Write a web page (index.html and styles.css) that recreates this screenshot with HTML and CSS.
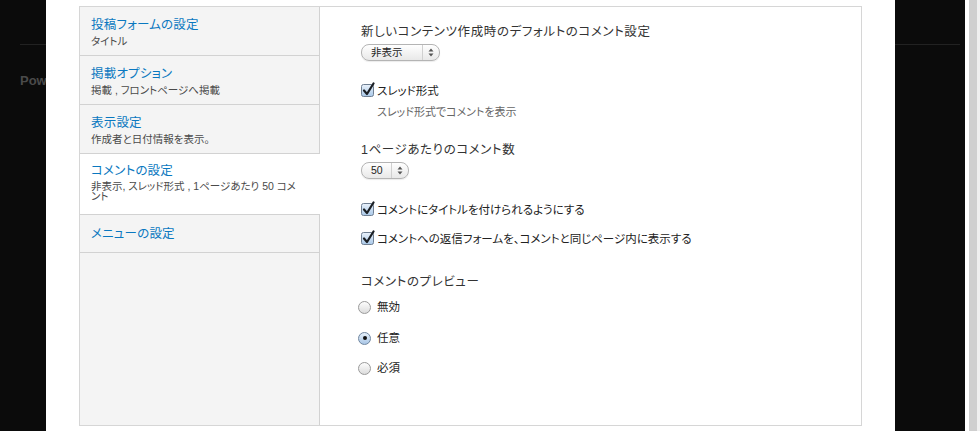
FILE: index.html
```html
<!DOCTYPE html>
<html lang="ja">
<head>
<meta charset="utf-8">
<title>コメントの設定</title>
<link rel="stylesheet" href="styles.css">
</head>
<body>
<div class="page">
  <div class="bg-left">
    <div class="bg-rule"></div>
    <div class="bg-text">Pow</div>
  </div>
  <div class="modal">
    <div class="panel">
      <ul class="tabs">
        <li class="tab">
          <div class="tab-title">投稿フォームの設定</div>
          <div class="tab-desc">タイトル</div>
        </li>
        <li class="tab">
          <div class="tab-title">掲載オプション</div>
          <div class="tab-desc">掲載 , フロントページへ掲載</div>
        </li>
        <li class="tab">
          <div class="tab-title">表示設定</div>
          <div class="tab-desc">作成者と日付情報を表示。</div>
        </li>
        <li class="tab active">
          <div class="tab-title">コメントの設定</div>
          <div class="tab-desc">非表示, スレッド形式 , 1ページあたり 50 コメント</div>
        </li>
        <li class="tab tab-single">
          <div class="tab-title">メニューの設定</div>
        </li>
      </ul>
      <div class="pane">
        <div class="field-label l1">新しいコンテンツ作成時のデフォルトのコメント設定</div>
        <div class="select s1">
          <span class="select-value">非表示</span>
          <span class="select-arrows"><svg width="6" height="9" viewBox="0 0 6 9"><path d="M3 0.5 L5.5 3.5 H0.5 Z M3 8.5 L5.5 5.5 H0.5 Z" fill="#555"/></svg></span>
        </div>
        <label class="check c1">
          <span class="box"><svg width="15" height="15" viewBox="0 0 15 15"><defs><linearGradient id="cg" x1="0" y1="0" x2="0" y2="1"><stop offset="0" stop-color="#eaf2fb"/><stop offset="1" stop-color="#a9c8e8"/></linearGradient></defs><rect x="0.5" y="2.5" width="12" height="12" rx="2" fill="url(#cg)" stroke="#6f7f92"/><path d="M3 8.5 L6 12 L12.5 1.5" fill="none" stroke="#1b1f24" stroke-width="2.2" stroke-linecap="round" stroke-linejoin="round"/></svg></span>
          <span class="check-text">スレッド形式</span>
        </label>
        <div class="field-desc d1">スレッド形式でコメントを表示</div>
        <div class="field-label l2">1ページあたりのコメント数</div>
        <div class="select s2">
          <span class="select-value">50</span>
          <span class="select-arrows"><svg width="6" height="9" viewBox="0 0 6 9"><path d="M3 0.5 L5.5 3.5 H0.5 Z M3 8.5 L5.5 5.5 H0.5 Z" fill="#555"/></svg></span>
        </div>
        <label class="check c2">
          <span class="box"><svg width="15" height="15" viewBox="0 0 15 15"><rect x="0.5" y="2.5" width="12" height="12" rx="2" fill="url(#cg)" stroke="#6f7f92"/><path d="M3 8.5 L6 12 L12.5 1.5" fill="none" stroke="#1b1f24" stroke-width="2.2" stroke-linecap="round" stroke-linejoin="round"/></svg></span>
          <span class="check-text">コメントにタイトルを付けられるようにする</span>
        </label>
        <label class="check c3">
          <span class="box"><svg width="15" height="15" viewBox="0 0 15 15"><rect x="0.5" y="2.5" width="12" height="12" rx="2" fill="url(#cg)" stroke="#6f7f92"/><path d="M3 8.5 L6 12 L12.5 1.5" fill="none" stroke="#1b1f24" stroke-width="2.2" stroke-linecap="round" stroke-linejoin="round"/></svg></span>
          <span class="check-text">コメントへの返信フォームを、コメントと同じページ内に表示する</span>
        </label>
        <div class="field-label l3">コメントのプレビュー</div>
        <label class="radio r1">
          <span class="dot"></span>
          <span class="radio-text">無効</span>
        </label>
        <label class="radio r2">
          <span class="dot on"></span>
          <span class="radio-text">任意</span>
        </label>
        <label class="radio r3">
          <span class="dot"></span>
          <span class="radio-text">必須</span>
        </label>
      </div>
    </div>
  </div>
  <div class="bg-right">
    <div class="bg-rule"></div>
  </div>
  <div class="gutter"></div>
  <div class="scrollbar"></div>
  <div class="scroll-edge"></div>
</div>
</body>
</html>
```
FILE: styles.css
```css
* { box-sizing: border-box; }
html, body { margin: 0; padding: 0; }
body {
  background: #0b0b0b;
  font-family: "Liberation Sans", "Noto Sans CJK JP", sans-serif;
  font-feature-settings: "palt";
  color: #333;
  overflow: hidden;
}
.page {
  display: flex;
  width: 980px;
  height: 431px;
  overflow: hidden;
}
.bg-left {
  width: 46px;
  flex: none;
  padding-left: 20px;
  overflow: hidden;
}
.bg-rule {
  margin-top: 44px;
  height: 1px;
  background: #222;
}
.bg-text {
  margin-top: 28px;
  font-size: 13px;
  line-height: 16px;
  color: #4a4a4a;
  font-weight: bold;
  white-space: nowrap;
}
.bg-right {
  width: 70px;
  flex: none;
  padding-right: 5px;
}
.gutter { width: 4px; flex: none; background: #fff; }
.scrollbar { width: 8px; flex: none; background: #cfcfcf; }
.scroll-edge { width: 3px; flex: none; background: #f0f0f0; }

.modal {
  width: 849px;
  flex: none;
  background: #fff;
  padding: 6px 0 0 33px;
}
.panel {
  width: 783px;
  height: 420px;
  border: 1px solid #d6d6d6;
  display: flex;
}
.tabs {
  list-style: none;
  margin: 0;
  padding: 0;
  width: 240px;
  flex: none;
  background: #f4f4f4;
  border-right: 1px solid #d2d2d2;
}
.tab {
  padding: 10px 16px 7px 11px;
  border-bottom: 1px solid #d2d2d2;
  height: 49px;
}
.tab.active {
  background: #fff;
  margin-right: -1px;
  height: 61px;
  padding-top: 9px;
}
.tab-single { height: 38px; padding-top: 11px; }
.tab-title {
  font-size: 12.5px;
  line-height: 16px;
  color: #0a78c0;
  letter-spacing: 0.2px;
}
.tab-desc {
  font-size: 10.5px;
  line-height: 10px;
  margin-top: 3px;
  color: #4a4a4a;
}
.tab.active .tab-desc { margin-top: 2px; }

.pane {
  flex: 1;
  padding: 17px 0 0 41px;
  display: flex;
  flex-direction: column;
  align-items: flex-start;
}
.field-label {
  font-size: 12.5px;
  line-height: 16px;
  color: #333;
  white-space: nowrap;
  letter-spacing: 0.6px;
}
.field-desc {
  font-size: 11px;
  line-height: 14px;
  color: #666;
  margin-left: 16px;
}
.select {
  height: 17px;
  border: 1px solid #b4b4b4;
  border-radius: 8px;
  background: linear-gradient(#ffffff, #e8e8e8);
  display: flex;
  align-items: stretch;
  box-shadow: 0 1px 1px rgba(0,0,0,0.08);
}
.select-value {
  font-size: 10.5px;
  line-height: 15px;
  color: #222;
  padding-left: 9px;
}
.select-arrows {
  border-left: 1px solid #d0d0d0;
  display: flex;
  align-items: center;
  justify-content: center;
  width: 17px;
}
.s1 { width: 79px; margin-top: 4px; }
.s1 .select-value { width: 61px; }
.s2 { width: 48px; margin-top: 4px; }
.s2 .select-value { width: 30px; }

.check, .radio {
  display: flex;
  align-items: center;
  height: 16px;
}
.box { width: 15px; height: 15px; display: block; margin-top: -3px; }
.box svg { display: block; }
.check-text, .radio-text {
  font-size: 11.5px;
  line-height: 16px;
  color: #222;
  margin-left: 1px;
  white-space: nowrap;
}
.c1 { margin-top: 22px; }
.d1 { margin-top: 6px; }
.l2 { margin-top: 23px; }
.c2 { margin-top: 23px; }
.c3 { margin-top: 13px; }
.l3 { margin-top: 27px; }
.r1 { margin-top: 9px; margin-left: -3px; }
.r2 { margin-top: 15px; margin-left: -3px; }
.r3 { margin-top: 14px; margin-left: -3px; }
.dot {
  width: 13px;
  height: 13px;
  border-radius: 50%;
  border: 1px solid #9a9a9a;
  background: linear-gradient(#fdfdfd, #dcdcdc);
  display: flex;
  align-items: center;
  justify-content: center;
  margin-right: 5px;
}
.dot.on {
  border-color: #6f86a0;
  background: linear-gradient(#e6f0fa, #a9c6e6);
}
.dot.on::after {
  content: "";
  width: 4px;
  height: 4px;
  border-radius: 50%;
  background: #111;
}
```
